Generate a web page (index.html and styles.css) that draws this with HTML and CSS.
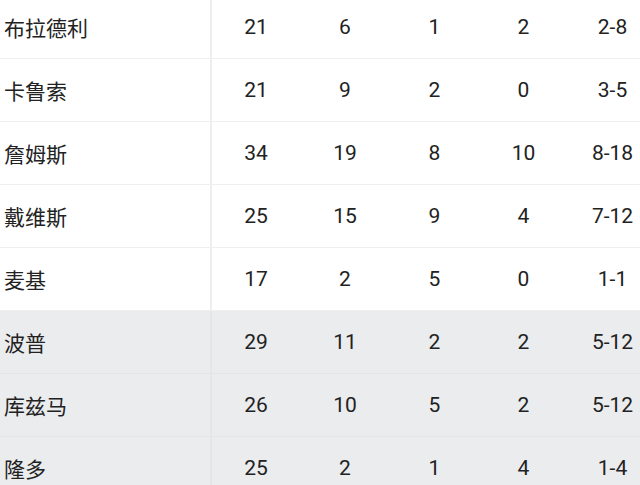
FILE: index.html
```html
<!DOCTYPE html>
<html lang="zh">
<head>
<meta charset="utf-8">
<link rel="stylesheet" href="styles.css">
</head>
<body>
<div class="table">
  <div class="row"><div class="name">布拉德利</div><div class="c">21</div><div class="c">6</div><div class="c">1</div><div class="c">2</div><div class="c">2-8</div></div>
  <div class="row"><div class="name">卡鲁索</div><div class="c">21</div><div class="c">9</div><div class="c">2</div><div class="c">0</div><div class="c">3-5</div></div>
  <div class="row"><div class="name">詹姆斯</div><div class="c">34</div><div class="c">19</div><div class="c">8</div><div class="c">10</div><div class="c">8-18</div></div>
  <div class="row"><div class="name">戴维斯</div><div class="c">25</div><div class="c">15</div><div class="c">9</div><div class="c">4</div><div class="c">7-12</div></div>
  <div class="row"><div class="name">麦基</div><div class="c">17</div><div class="c">2</div><div class="c">5</div><div class="c">0</div><div class="c">1-1</div></div>
  <div class="row bench"><div class="name">波普</div><div class="c">29</div><div class="c">11</div><div class="c">2</div><div class="c">2</div><div class="c">5-12</div></div>
  <div class="row bench"><div class="name">库兹马</div><div class="c">26</div><div class="c">10</div><div class="c">5</div><div class="c">2</div><div class="c">5-12</div></div>
  <div class="row bench"><div class="name">隆多</div><div class="c">25</div><div class="c">2</div><div class="c">1</div><div class="c">4</div><div class="c">1-4</div></div>
</div>
</body>
</html>
```
FILE: styles.css
```css
html, body {
  margin: 0;
  padding: 0;
  overflow: hidden;
  background: #ffffff;
}
.table {
  margin-top: -4px;
  width: 657px;
  font-family: Roboto, "Noto Sans CJK SC", sans-serif;
  font-size: 21px;
  color: #222222;
}
.row {
  display: grid;
  grid-template-columns: 212px 88px 90px 89px 89px 89px;
  height: 63px;
  box-sizing: border-box;
  border-bottom: 1px solid #efefef;
  background: #ffffff;
}
.row.bench {
  background: #ebecee;
  border-bottom-color: #e4e5e7;
}
.name {
  display: flex;
  align-items: center;
  padding-left: 4px;
  box-sizing: border-box;
  border-right: 2px solid #eeeeee;
}
.bench .name {
  border-right-color: #e5e6e8;
}
.c {
  display: flex;
  align-items: center;
  justify-content: center;
}
```
